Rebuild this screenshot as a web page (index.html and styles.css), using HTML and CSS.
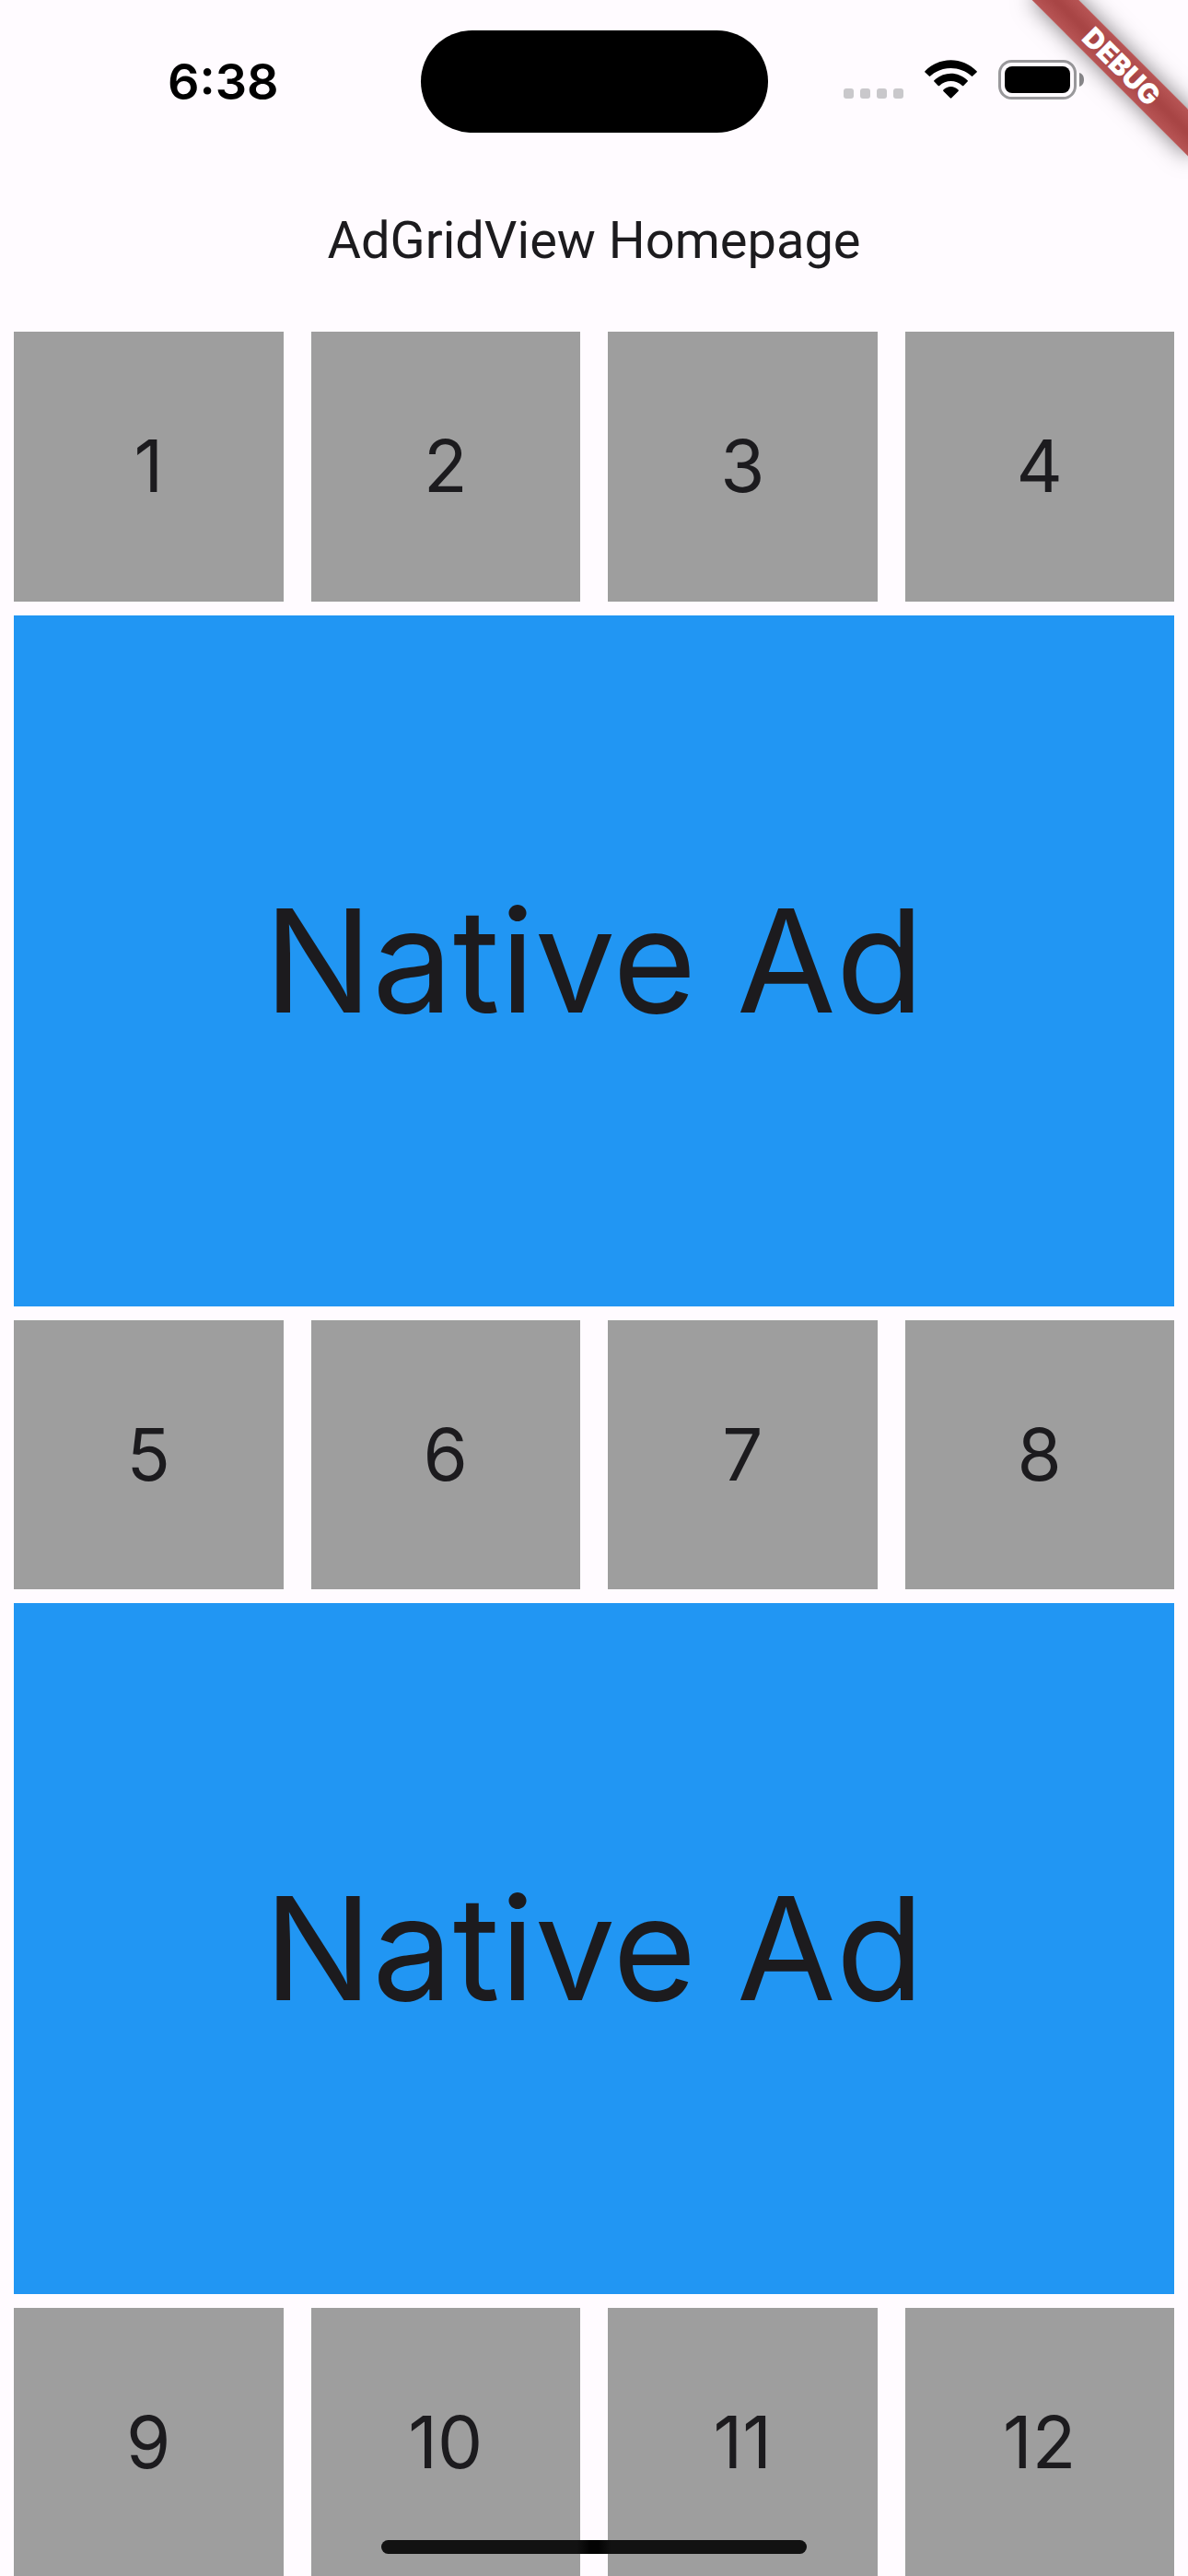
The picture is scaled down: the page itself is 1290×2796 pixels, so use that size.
FILE: index.html
```html
<!DOCTYPE html>
<html lang="en">
<head>
<meta charset="utf-8">
<meta name="viewport" content="width=device-width, initial-scale=1">
<title>AdGridView Homepage</title>
<link rel="stylesheet" href="styles.css">
</head>
<body>
<div class="app">
  <div class="status-bar">
    <div class="status-time">6:38</div>
    <div class="island"></div>
    <div class="status-icons">
      <svg class="icon-signal" width="65" height="43" viewBox="0 0 65 43" aria-hidden="true">
        <g fill="#c9c8cb">
          <rect x="0" y="31" width="11" height="11" rx="3"/>
          <rect x="18" y="31" width="11" height="11" rx="3"/>
          <rect x="36" y="31" width="11" height="11" rx="3"/>
          <rect x="54" y="31" width="11" height="11" rx="3"/>
        </g>
      </svg>
      <svg class="icon-wifi" width="57" height="43" viewBox="0 0 57 43" aria-hidden="true">
        <path d="M0.4 12.2Q-0.2 12.9 0.5 13.6L4.8 17.6Q5.5 18.2 6.2 17.5C18.700 6 38.300 6 50.800 17.500Q51.500 18.200 52.200 17.600L56.500 13.600Q57.200 12.900 56.600 12.200C41-3.700 16-3.700 0.400 12.200Z"/>
        <path d="M10.400 22.300Q9.700 23 10.400 23.600L14.700 27.900Q15.400 28.600 16.100 27.900C23.200 21.500 33.800 21.500 40.900 27.900Q41.600 28.600 42.300 27.900L46.600 23.600Q47.300 23 46.600 22.300C36.400 12.300 20.600 12.300 10.400 22.300Z"/>
        <path d="M20.400 32.500Q19.700 33.200 20.400 33.900L27.700 41.300Q28.500 42.100 29.300 41.300L36.600 33.900Q37.300 33.200 36.600 32.500C32 27.800 25 27.800 20.400 32.500Z"/>
      </svg>
      <svg class="icon-battery" width="93" height="43" viewBox="0 0 93 43" aria-hidden="true">
        <rect x="1.500" y="1.500" width="82" height="40" rx="13" fill="none" stroke="#99989b" stroke-width="3"/>
        <rect x="7" y="7" width="71" height="29" rx="8"/>
        <path d="M88 14C91.500 15 93 18 93 21.500S91.500 28 88 29Z" fill="#88878a"/>
      </svg>
    </div>
  </div>

  <header class="app-bar">
    <h1 class="app-title">AdGridView Homepage</h1>
  </header>

  <main class="feed">
    <div class="tile-row">
      <div class="tile">1</div>
      <div class="tile">2</div>
      <div class="tile">3</div>
      <div class="tile">4</div>
    </div>
    <div class="ad">Native Ad</div>
    <div class="tile-row">
      <div class="tile">5</div>
      <div class="tile">6</div>
      <div class="tile">7</div>
      <div class="tile">8</div>
    </div>
    <div class="ad">Native Ad</div>
    <div class="tile-row">
      <div class="tile">9</div>
      <div class="tile">10</div>
      <div class="tile">11</div>
      <div class="tile">12</div>
    </div>
  </main>

  <div class="debug-corner"><div class="debug-banner">DEBUG</div></div>
  <div class="home-indicator"></div>
</div>
</body>
</html>
```
FILE: styles.css
```css
* {
  box-sizing: border-box;
}

body {
  margin: 0;
  background: #fffbff;
  color: #1c1b1e;
  font-family: Inter, "Liberation Sans", sans-serif;
}

.app {
  position: relative;
  display: flex;
  flex-direction: column;
  height: 100vh;
  overflow: hidden;
}

/* Status bar */
.status-bar {
  flex: none;
  display: grid;
  grid-template-columns: 1fr 377px 1fr;
  align-items: center;
  height: 177px;
  color: #000;
}

.status-time {
  padding-left: 28px;
  text-align: center;
  font-size: 54px;
  font-weight: 600;
  line-height: 64px;
}

.island {
  height: 111px;
  border-radius: 56px;
  background: #000;
}

.status-icons {
  display: flex;
  justify-content: center;
  gap: 23px;
  padding: 0 30px 4px 0;
}

.status-icons svg {
  display: block;
}

/* App bar */
.app-bar {
  flex: none;
  display: flex;
  align-items: center;
  justify-content: center;
  height: 168px;
}

.app-title {
  margin: 0;
  font-family: Roboto, Inter, sans-serif;
  font-size: 56px;
  font-weight: 400;
  line-height: 72px;
}

/* Feed */
.feed {
  flex: 1;
  display: flex;
  flex-direction: column;
  gap: 15px;
  min-height: 0;
  padding: 15px 15px 0;
  overflow-y: auto;
  scrollbar-width: none;
}

.tile-row {
  flex: none;
  display: grid;
  grid-template-columns: repeat(4, 1fr);
  gap: 30px;
}

.tile {
  display: flex;
  align-items: center;
  justify-content: center;
  aspect-ratio: 1;
  background: #9e9e9e;
  font-size: 78px;
  line-height: 96px;
}

.ad {
  flex: none;
  display: flex;
  align-items: center;
  justify-content: center;
  height: 750px;
  background: #2196f3;
  font-size: 156px;
  line-height: 192px;
}

/* Corner ribbon */
.debug-corner {
  position: absolute;
  top: 0;
  right: 0;
  width: 240px;
  height: 240px;
  overflow: hidden;
  pointer-events: none;
}

.debug-banner {
  position: absolute;
  top: 54px;
  right: -48px;
  width: 240px;
  height: 36px;
  transform: rotate(45deg);
  background: linear-gradient(#b85555, #a84545 45%, #a84545 55%, #b85555);
  box-shadow: 0 0 24px rgba(0, 0, 0, 0.5);
  color: #fff;
  font-size: 30px;
  font-weight: 900;
  line-height: 36px;
  text-align: center;
}

/* Home indicator */
.home-indicator {
  position: absolute;
  bottom: 24px;
  left: 50%;
  width: 462px;
  height: 15px;
  margin-left: -231px;
  border-radius: 8px;
  background: linear-gradient(90deg, #121212 46%, #030303 49%, #030303 51%, #121212 54%);
}
```
